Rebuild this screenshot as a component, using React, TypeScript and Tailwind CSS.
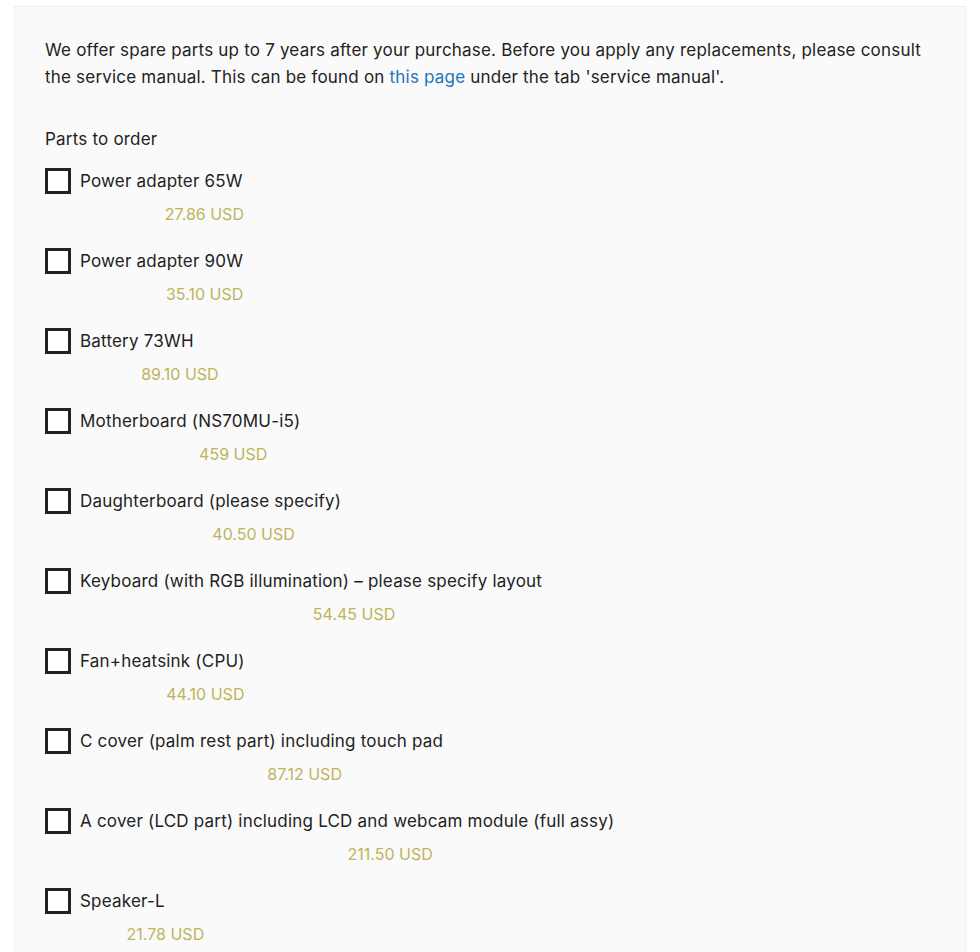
const parts = [
  { name: "Power adapter 65W", price: "27.86 USD" },
  { name: "Power adapter 90W", price: "35.10 USD" },
  { name: "Battery 73WH", price: "89.10 USD" },
  { name: "Motherboard (NS70MU-i5)", price: "459 USD" },
  { name: "Daughterboard (please specify)", price: "40.50 USD" },
  { name: "Keyboard (with RGB illumination) – please specify layout", price: "54.45 USD" },
  { name: "Fan+heatsink (CPU)", price: "44.10 USD" },
  { name: "C cover (palm rest part) including touch pad", price: "87.12 USD" },
  { name: "A cover (LCD part) including LCD and webcam module (full assy)", price: "211.50 USD" },
  { name: "Speaker-L", price: "21.78 USD" },
];

export default function App() {
  return (
    <div className="h-[952px] overflow-hidden bg-white pt-[6px] pl-[14px] pr-[14px] font-['Inter',sans-serif] text-[#222]">
      <div className="border border-[#efefef] border-b-0 bg-[#fafafa] pl-[30px] pr-[30px] pt-[30px] pb-6 min-h-[946px]">
        <p className="text-[17px] leading-[27px] tracking-[0.2px]">
          We offer spare parts up to 7 years after your purchase. Before you apply any replacements, please consult the
          service manual. This can be found on{" "}
          <a href="#" className="text-[#1e73be]">
            this page
          </a>{" "}
          under the tab 'service manual'.
        </p>

        <div className="mt-[35px] text-[17px] leading-[27px] tracking-[0.2px]">Parts to order</div>

        <div className="mt-[15px] flex flex-col">
          {parts.map((p) => (
            <label key={p.name} className="flex items-start gap-[9px] h-[80px] cursor-pointer">
              <span className="w-[26px] h-[26px] border-[3px] border-[#222] bg-white shrink-0" />
              <span className="inline-flex flex-col">
                <span className="flex">
                  <span className="text-[17px] leading-[26px] tracking-[0.2px] whitespace-nowrap">{p.name}</span>
                  <span className="w-[86px] shrink-0" />
                </span>
                <span className="mt-[7px] text-center text-[16px] leading-[26px] text-[#bfb35d]">{p.price}</span>
              </span>
            </label>
          ))}
        </div>
      </div>
    </div>
  );
}
